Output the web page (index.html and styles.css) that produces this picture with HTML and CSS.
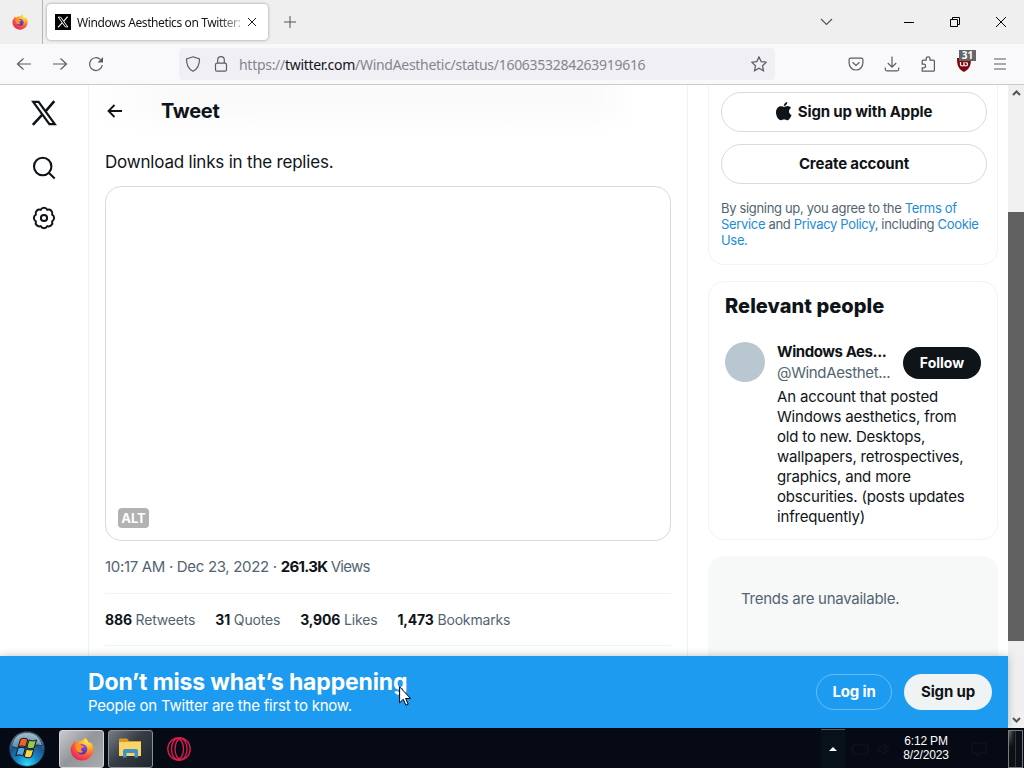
FILE: index.html
```html
<!DOCTYPE html>
<html lang="en">
<head>
<meta charset="utf-8">
<title>Windows Aesthetics on Twitter</title>
<link rel="stylesheet" href="styles.css">
</head>
<body>
<svg width="0" height="0" class="defs" aria-hidden="true">
  <defs>
    <radialGradient id="fox" cx="75%" cy="15%" r="95%"><stop offset="0" stop-color="#fff04a"/><stop offset=".35" stop-color="#ffae25"/><stop offset=".65" stop-color="#ff5a36"/><stop offset="1" stop-color="#e52064"/></radialGradient>
    <linearGradient id="globe" x1="0" y1="0" x2="0" y2="1"><stop offset="0" stop-color="#9a50e8"/><stop offset="1" stop-color="#4b2fb5"/></linearGradient>
    <radialGradient id="orb" cx="50%" cy="95%" r="90%"><stop offset="0" stop-color="#35dcff"/><stop offset=".35" stop-color="#1489c6"/><stop offset=".7" stop-color="#1c5388"/><stop offset="1" stop-color="#8eafc4"/></radialGradient>
    <symbol id="firefox" viewBox="0 0 24 24">
      <path fill="url(#fox)" d="M4.2 4.1C5 5 5.8 5.4 6.5 5.4 8 4 10 3.3 11.8 3.4 13.6 3 14.5 1.7 14.6.5c2.2 1.4 3.2 3 3.6 4.6.9.5 1.3 1.1 1.6 1.6 0-.8-.1-1.4-.5-2.2C22.500 6.500 23.500 9.500 23.400 12.500 23.200 18.800 18.200 23.500 12 23.500 5.700 23.500.7 18.600.7 12.500.7 9.500 2 7.600 3.400 6.400 3.400 5.600 3.700 4.800 4.200 4.100z"/>
      <circle cx="12" cy="12.300" r="5.300" fill="url(#globe)"/>
      <path fill="#ff9328" d="M5 7.500c2.500-1.200 5-.6 6.800 1.200l2.400.6c-.3 1.400-2.300 1.200-3 2.200-.5 1.300.2 3 2 3.300-2.800 2.100-6.500.2-7.300-2.500z"/>
    </symbol>
    <symbol id="x" viewBox="0 0 27 27">
      <path fill="none" stroke="currentColor" stroke-width="2.300" d="M2.300 2h5.600l16.800 23h-5.600z"/>
      <path fill="none" stroke="currentColor" stroke-width="2.600" d="M24.200 1.200 15.300 11.500M11.500 15.500 1.900 25.900"/>
    </symbol>
  </defs>
</svg>

<header class="tabs">
  <div class="pinned"><svg class="i16"><use href="#firefox"/></svg></div>
  <div class="tab">
    <svg class="i16 favicon" viewBox="-5 -5 37 37"><use href="#x" width="27" height="27"/></svg>
    <span class="tab-title">Windows Aesthetics on Twitter:</span>
    <svg class="tab-close" viewBox="0 0 10 10"><path d="m1 1 8 8m0-8-8 8"/></svg>
  </div>
  <svg class="new-tab" viewBox="0 0 12 12"><path d="M6 0v12M0 6h12"/></svg>
  <svg class="list-tabs" viewBox="0 0 13 8"><path d="m1 1 5.500 5.500L12 1"/></svg>
  <div class="window-buttons">
    <svg viewBox="0 0 12 12"><path d="M1 6.500h10"/></svg>
    <svg viewBox="0 0 12 12"><path d="M1.500 3.500h7v7h-7zM3.500 3V1.500h7v7H9"/></svg>
    <svg viewBox="0 0 12 12"><path d="m1 1 10 10m0-10L1 11"/></svg>
  </div>
</header>

<nav class="toolbar">
  <div class="nav-buttons">
    <svg viewBox="0 0 16 16"><path d="M15 8H1.500M7.500 2.500 1.500 8l6 5.500"/></svg>
    <svg viewBox="0 0 16 16"><path d="M1 8h13.500M8.500 2.500l6 5.500-6 5.500"/></svg>
    <svg viewBox="0 0 16 16"><path d="M14.300 9A6.400 6.400 0 1 1 12.500 3.600"/><path class="solid" d="M15 1v5.500H9.500z"/></svg>
  </div>
  <div class="url">
    <svg viewBox="0 0 16 16"><path d="M8 .8 14.500 3c0 6-1.500 10-6.500 12.300C3 13 1.500 9 1.500 3z"/></svg>
    <svg viewBox="0 0 16 16"><rect x="2.500" y="7.200" width="11" height="8" rx="1.500"/><path d="M4.700 7V4a3.300 3.300 0 0 1 6.600 0v3"/></svg>
    <span class="address">https://<b>twitter.com</b>/WindAesthetic/status/1606353284263919616</span>
    <svg class="star" viewBox="0 0 16 16"><path d="m8 .9 2.200 4.700 5.100.6-3.800 3.500 1 5.100L8 12.300l-4.500 2.500 1-5.100L.7 6.200l5.100-.6z"/></svg>
  </div>
  <div class="tools">
    <svg viewBox="0 0 16 16"><path d="M2.500 2.200h11a1.500 1.500 0 0 1 1.400 1.400v3.500A6.900 6.900 0 0 1 1.100 7.100V3.600a1.500 1.500 0 0 1 1.400-1.400z"/><path d="m4.500 6.200 3.500 3.300 3.500-3.300"/></svg>
    <svg viewBox="0 0 16 16"><path d="M8 .5V11M3.800 7 8 11.200 12.200 7M1.300 11.500v1.800q0 1.500 1.500 1.500h10.400q1.500 0 1.500-1.500v-1.800"/></svg>
    <svg viewBox="0 0 16 16"><path d="M2.200 15.200v-3.400h1.600a1.800 1.800 0 0 0 0-3.600H2.200V5.200q0-1 1-1h3V2.800a1.900 1.900 0 0 1 3.800 0v1.400h3.400q1 0 1 1v9q0 1-1 1z"/></svg>
    <div class="ublock">
      <svg viewBox="0 0 16 16"><path fill="#800610" stroke="none" d="M8 0c3 1.600 4.600 2 7 2 0 7-1 11-7 14C2 13 1 9 1 2c2.400 0 4-.4 7-2z"/><path stroke="#fff" d="M4.500 6v2.500q0 1.500 1.700 1.500T8 8.500V6m0 2.500q0 1.500 1.700 1.500t1.800-1.700T9.500 6.500"/></svg>
      <span class="count">31</span>
    </div>
    <svg viewBox="0 0 16 16"><path d="M2 3h12M2 8h12M2 13h12"/></svg>
  </div>
</nav>

<div class="page">
  <aside class="rail">
    <svg class="logo"><use href="#x"/></svg>
    <svg class="search" viewBox="0 0 24 24"><circle cx="10.700" cy="10.500" r="8.700"/><path d="m17 17 5.700 5.500"/></svg>
    <svg class="gear" viewBox="0 0 24 24"><path d="M8.700 3.900a3.700 3.700 0 0 1 6.600 0 3.700 3.700 0 0 1 4.800 4.800 3.700 3.700 0 0 1 0 6.600 3.700 3.700 0 0 1-4.800 4.800 3.700 3.700 0 0 1-6.600 0 3.700 3.700 0 0 1-4.800-4.800 3.700 3.700 0 0 1 0-6.600 3.700 3.700 0 0 1 4.800-4.800z"/><circle cx="12" cy="12" r="3.100"/></svg>
  </aside>

  <main class="column">
    <div class="column-head">
      <svg viewBox="0 0 16 16"><path d="M15 8H1.700M7.500 2 1.500 8l6 6"/></svg>
      <h1>Tweet</h1>
    </div>
    <p class="tweet-text">Download links in the replies.</p>
    <div class="media"><span class="alt">ALT</span></div>
    <div class="meta">10:17 AM · Dec 23, 2022 · <b>261.3K</b><span> Views</span></div>
    <div class="stats">
      <span><b>886</b> Retweets</span><span><b>31</b> Quotes</span><span><b>3,906</b> Likes</span><span><b>1,473</b> Bookmarks</span>
    </div>
  </main>

  <aside class="side">
    <section class="card signup">
      <div class="pill"><svg class="apple" viewBox="0 0 16 19"><path d="M11.300 0c.2 2-1.500 4-3.500 4C7.500 2.200 9.300.2 11.300 0zM8 5c.7 0 1.900-.9 3.600-.9 1.300 0 2.600.7 3.400 1.900-3 1.800-2.500 5.700.6 7-.8 2.100-2.500 5.300-4.400 5.300-1.200 0-1.500-.7-3.100-.7s-2 .7-3.100.7C2.400 18.300 0 13.800 0 10.500 0 7 2.200 4.300 4.800 4.300 6.200 4.300 7.300 5 8 5z"/></svg>Sign up with Apple</div>
      <div class="pill">Create account</div>
      <p class="legal">By signing up, you agree to the <a>Terms of</a><br><a>Service</a> and <a>Privacy Policy</a>, including <a>Cookie</a><br><a>Use.</a></p>
    </section>
    <section class="card people">
      <h2>Relevant people</h2>
      <div class="person">
        <div class="avatar"></div>
        <div class="person-body">
          <div class="person-top">
            <div class="names"><b>Windows Aes...</b><span>@WindAesthet...</span></div>
            <div class="follow">Follow</div>
          </div>
          <p>An account that posted<br>Windows aesthetics, from<br>old to new. Desktops,<br>wallpapers, retrospectives,<br>graphics, and more<br>obscurities. (posts updates<br>infrequently)</p>
        </div>
      </div>
    </section>
    <section class="trends">Trends are unavailable.</section>
  </aside>

  <div class="scrollbar">
    <svg viewBox="0 0 9 6"><path d="m1 5 3.500-3.500L8 5"/></svg>
    <div class="thumb"></div>
    <svg viewBox="0 0 9 6"><path d="m1 1 3.500 3.500L8 1"/></svg>
  </div>

  <div class="banner">
    <div class="banner-text"><strong>Don’t miss what’s happening</strong><span>People on Twitter are the first to know.</span></div>
    <div class="login">Log in</div>
    <div class="join">Sign up</div>
  </div>
</div>

<footer class="taskbar">
  <svg class="start" viewBox="0 0 36 36">
    <circle cx="18" cy="18" r="17.300" fill="url(#orb)" stroke="#24465e" stroke-width=".8"/>
    <path fill="#b8cad5" opacity=".5" d="M2.500 15C5 5 11 1.500 18 1.500S31 5 33.500 15C24 11 12 21 2.500 15z"/>
    <path fill="#ef6328" d="M11.500 8.200c2.500-1.500 5-1 7.300.2l-2.200 7.700c-2.400-1.300-4.800-1.600-7.300-.3z"/>
    <path fill="#9bc949" d="M20 9c2.600 1.200 5 1.300 7.500-.1l-2.300 7.800c-2.400 1.300-4.800 1.200-7.400-.1z"/>
    <path fill="#58a6df" d="M9 17.200c2.500-1.200 4.900-1 7.200.2L14 25c-2.400-1.300-4.800-1.500-7.200-.3z"/>
    <path fill="#fbd34b" d="M17.400 18c2.600 1.300 5 1.300 7.400.1l-2.300 7.700c-2.400 1.300-4.800 1.200-7.300-.1z"/>
  </svg>
  <div class="task active"><svg class="i24"><use href="#firefox"/></svg></div>
  <div class="task"><svg class="folder" viewBox="0 0 23 21"><path fill="#d99b1d" d="M0 1.500Q0 .5 1 .5h7l2 2.500h12v4H0z"/><path fill="#fbd468" d="M0 4h22v14H0z"/><path fill="#3f93c8" d="M4 19.500V13q0-2 2-2h11q2 0 2 2v6.500h-3.500V15h-8v4.500z"/></svg></div>
  <svg class="opera" viewBox="0 0 26 26"><circle cx="13" cy="13" r="11.200"/><ellipse cx="11.500" cy="13" rx="6" ry="10.500"/><ellipse cx="15" cy="13" rx="6" ry="10.500"/></svg>
  <div class="tray">
    <div class="expand"><svg viewBox="0 0 8 4"><path d="M4 0 8 4H0z"/></svg></div>
    <svg class="ghost" viewBox="0 0 40 14"><path d="M3 3h15v9H3zM0 6h3M28 5h3l4-3v10l-4-3h-3zM37 4q3 3 0 6"/></svg>
    <div class="clock"><span>6:12 PM</span><span>8/2/2023</span></div>
    <svg class="ghost note" viewBox="0 0 16 16"><path d="M1 2h14v10H9l-3 3v-3H1z"/></svg>
    <div class="peek"></div>
  </div>
</footer>

<svg class="cursor" viewBox="0 0 12 20"><path d="M.6.8v16l3.700-3.500 2.600 5.900 2.300-1-2.600-5.700h5z"/></svg>
</body>
</html>
```

FILE: styles.css
```css
* { box-sizing: border-box; }
body { margin: 0; width: 1024px; height: 768px; overflow: hidden; position: relative; display: flex; flex-direction: column; background: #fff; font-family: Inter, "Liberation Sans", sans-serif; color: #0f1419; }
h1, h2, p { margin: 0; }
svg { display: block; flex: none; fill: none; stroke: currentColor; }
.defs { position: absolute; }
.i16 { width: 16px; height: 16px; stroke: none; }
.i24 { width: 24px; height: 24px; stroke: none; }

.tabs { height: 44px; flex: none; background: #efefef; display: flex; align-items: center; font-family: "Noto Sans", sans-serif; }
.pinned { width: 43px; height: 44px; padding: 14px 0 0 12px; border-right: 1px solid #b5b5b5; }
.tab { margin-left: 4px; width: 221px; height: 36px; background: #fff; border-radius: 4px; box-shadow: 0 0 3px rgba(0,0,0,.4); display: flex; align-items: center; padding: 0 8px; }
.favicon { background: #000; color: #fff; }
.tab-title { margin-left: 6px; width: 168px; margin-right: -4px; white-space: nowrap; font-size: 12px; letter-spacing: -.4px; color: #15141a; -webkit-mask-image: linear-gradient(90deg, #000 140px, transparent 172px); mask-image: linear-gradient(90deg, #000 140px, transparent 172px); }
.tab-close { width: 10px; height: 10px; margin-left: 6px; stroke: #222; }
.new-tab { width: 12px; height: 12px; margin-left: 16px; stroke: #555; }
.list-tabs { width: 13px; height: 8px; margin-left: auto; stroke: #555; stroke-width: 1.2; }
.window-buttons { display: flex; gap: 34px; padding: 0 17px 0 70px; }
.window-buttons svg { width: 12px; height: 12px; stroke: #000; }

.toolbar { height: 41px; flex: none; background: #f9f9fb; border-bottom: 1px solid #c9c9ce; display: flex; align-items: center; color: #5b5b66; stroke-width: 1.2; }
.toolbar svg { width: 16px; height: 16px; }
.solid { fill: currentColor; stroke: none; }
.nav-buttons { display: flex; gap: 20px; padding-left: 16px; width: 179px; }
.url { width: 596px; height: 32px; background: #f0f0f4; border-radius: 4px; display: flex; align-items: center; padding: 0 8px 0 6px; gap: 12px; }
.address { font: 14px "Noto Sans", sans-serif; color: #85858e; white-space: nowrap; margin-left: -2px; letter-spacing: -.29px; }
.address b { font-weight: 400; color: #15141a; }
.star { margin-left: auto; }
.tools { display: flex; gap: 20px; margin-left: auto; padding-right: 16px; }
.ublock { position: relative; }
.count { position: absolute; left: 3px; top: -6px; width: 17px; height: 11px; background: #666; color: #fff; font: 700 10px/11px "Noto Sans", sans-serif; text-align: center; }

.page { height: 643px; flex: none; position: relative; display: flex; overflow: hidden; }
.rail { width: 88px; padding: 15px 0 0 31px; display: flex; flex-direction: column; }
.logo { width: 26px; height: 26px; }
.search { width: 24px; height: 24px; stroke-width: 2.1; margin: 30px 0 0 1px; }
.gear { width: 24px; height: 24px; stroke-width: 2; stroke-linejoin: round; margin: 26px 0 0 1px; }

.column { width: 600px; border: solid #eff3f4; border-width: 0 1px; padding: 0 16px; }
.column-head { height: 53px; margin: 0 -16px; padding: 0 0 2px 18px; display: flex; align-items: center; background: linear-gradient(transparent 40%, #fff 95%), linear-gradient(90deg, #fff, #fafafa 14%, #fafafa 84%, #fff 92%); }
.column-head svg { width: 16px; height: 16px; stroke-width: 1.8; }
.column-head h1 { font-size: 20px; line-height: 24px; font-weight: 700; margin-left: 38px; letter-spacing: -.3px; }
.tweet-text { font-size: 17px; line-height: 24px; margin-top: 12px; letter-spacing: -.2px; }
.media { width: 566px; height: 355px; margin-top: 12px; border: 1px solid #d5dbde; border-radius: 16px; display: flex; align-items: flex-end; padding: 12px; }
.alt { background: #b2b2b2; color: #fff; font-size: 13px; font-weight: 700; line-height: 20px; width: 31px; text-align: center; border-radius: 4px; }
.meta { color: #536471; font-size: 15px; line-height: 20px; margin-top: 16px; padding-bottom: 16px; border-bottom: 1px solid #eff3f4; white-space: nowrap; letter-spacing: -.32px; }
.meta b, .stats b { color: #0f1419; }
.meta b { letter-spacing: -.7px; }
.meta span { letter-spacing: -.75px; }
.stats { height: 52px; border-bottom: 1px solid #eff3f4; display: flex; align-items: center; gap: 20px; color: #536471; font-size: 14px; letter-spacing: -.17px; white-space: nowrap; }

.side { width: 290px; margin-left: 20px; }
.card { border: 1px solid #f1f4f5; border-radius: 16px; }
.signup { height: 180px; border-top: 0; border-radius: 0 0 16px 16px; padding: 7px 10px 0 12px; }
.pill { height: 40px; margin-bottom: 12px; padding-bottom: 1px; border: 1px solid #d5dbde; border-radius: 20px; display: flex; align-items: center; justify-content: center; font-size: 15px; font-weight: 700; letter-spacing: -.14px; }
.apple { width: 16px; height: 19px; margin-right: 6px; fill: #0f1419; stroke: none; }
.legal { font-size: 13px; line-height: 16px; color: #536471; white-space: nowrap; padding-top: 4px; letter-spacing: -.33px; }
.legal a { color: #1d8bd6; }
.people { height: 259px; margin-top: 16px; padding: 12px 16px; }
.people h2 { font-size: 20px; line-height: 24px; font-weight: 800; letter-spacing: .05px; }
.person { display: flex; gap: 12px; margin-top: 24px; }
.avatar { width: 40px; height: 40px; border-radius: 50%; background: #b9c8d0; }
.person-body { flex: 1; font-size: 15px; line-height: 20px; white-space: nowrap; }
.person-top { display: flex; align-items: center; justify-content: space-between; height: 42px; }
.names { display: flex; flex-direction: column; line-height: 21px; margin-top: -2px; letter-spacing: -.43px; }
.names span { color: #536471; letter-spacing: -.35px; }
.follow { width: 78px; height: 32px; border-radius: 16px; background: #0f1419; color: #fff; font-size: 14px; font-weight: 700; line-height: 32px; text-align: center; }
.person-body p { margin-top: 3px; letter-spacing: -.18px; }
.trends { height: 110px; margin-top: 16px; padding: 33px; background: #f7f9f9; border-radius: 16px 16px 0 0; color: #536471; font-size: 15px; line-height: 20px; letter-spacing: -.26px; }

.scrollbar { width: 16px; margin-left: auto; background: #f0f0f0; display: flex; flex-direction: column; align-items: center; padding: 5px 0; }
.scrollbar svg { width: 9px; height: 6px; stroke: #555; stroke-width: 2; }
.thumb { width: 16px; height: 429px; margin: 116px 0 auto; background: #606060; }

.banner { position: absolute; left: 0; right: 16px; bottom: 0; height: 72px; padding: 0 16px 0 88px; background: #1d9bf0; color: #fff; display: flex; align-items: center; box-shadow: 0 0 8px rgba(60,80,90,.35); }
.banner-text { display: flex; flex-direction: column; margin-right: auto; white-space: nowrap; }
.banner strong { font-size: 23px; line-height: 28px; letter-spacing: -.16px; }
.banner span { font-size: 15px; line-height: 20px; letter-spacing: -.21px; }
.login, .join { height: 36px; border-radius: 18px; font-size: 15px; font-weight: 700; line-height: 34px; text-align: center; letter-spacing: -.15px; }
.login { width: 76px; border: 1px solid #6bbcf5; margin-right: 12px; }
.join { width: 88px; background: #eff3f4; color: #0f1419; line-height: 36px; }

.taskbar { height: 40px; flex: none; background: #050a14; display: flex; align-items: center; border-top: 1px solid #020407; }
.start { width: 36px; height: 36px; margin-left: 9px; }
.task { width: 45px; height: 38px; margin-left: 4px; border: 1px solid #8c9298; border-radius: 3px; background: linear-gradient(135deg, #777d84, #373d45 45%, #20262e); display: flex; align-items: center; justify-content: center; }
.task.active { margin-left: 14px; border-color: #d5d5d7; background: linear-gradient(135deg, #c9cacd, #929599 48%, #a9abad); }
.folder { width: 23px; height: 21px; stroke: none; }
.opera { width: 26px; height: 26px; margin-left: 13px; stroke: #d61d4d; stroke-width: 1.4; }
.tray { margin-left: auto; height: 39px; display: flex; align-items: center; color: #fff; }
.expand { width: 24px; height: 39px; border-top: 1px solid #50565c; background: #07111b; display: flex; justify-content: center; align-items: center; }
.expand svg { width: 8px; height: 4px; fill: #fff; stroke: none; }
.ghost { width: 40px; height: 14px; margin-left: 5px; stroke: #10151e; }
.clock { width: 60px; margin: 0 0 2px 6px; display: flex; flex-direction: column; text-align: center; font: 12px/14px "Liberation Sans", sans-serif; letter-spacing: -.15px; }
.note { width: 16px; height: 16px; margin-left: 15px; }
.peek { width: 15px; height: 38px; margin-left: 21px; margin-right: 1px; border: 1px solid #777c80; background: linear-gradient(90deg, rgba(5,10,15,.1), #0a1015 45%, #333a3e 50%, #0a1015 55%), linear-gradient(#777, #111 45%); }

.cursor { position: absolute; left: 399px; top: 686px; width: 12px; height: 20px; fill: #fff; stroke: #000; stroke-width: 1; }
```
